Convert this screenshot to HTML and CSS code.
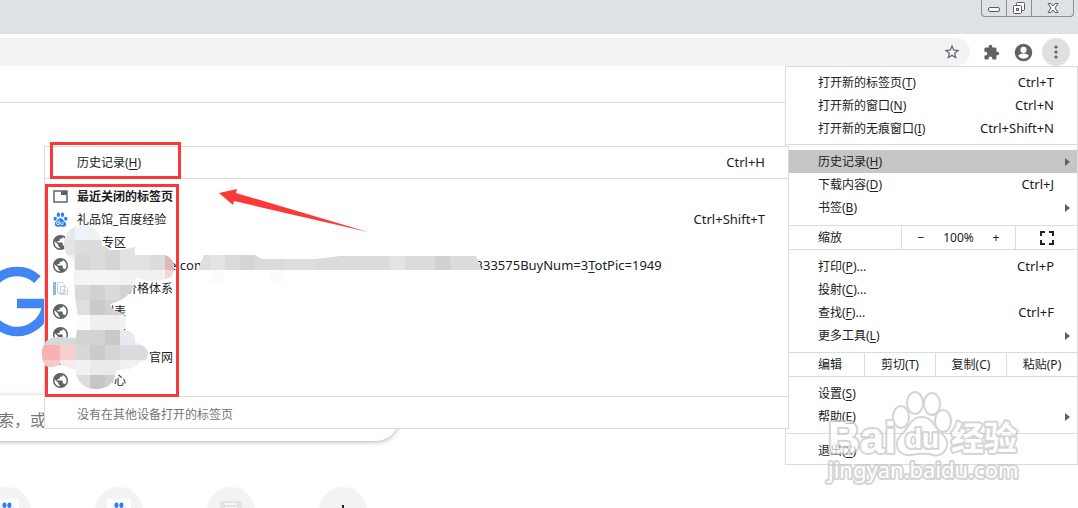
FILE: index.html
```html
<!DOCTYPE html>
<html lang="zh-CN">
<head>
  <meta charset="UTF-8">
  <meta name="viewport" content="width=device-width, initial-scale=1.0">
  <title>新标签页</title>
  <link rel="stylesheet" href="styles.css">
</head>
<body>
  <svg class="defs" aria-hidden="true">
    <symbol id="globe" viewBox="2 2 20 20">
      <path d="M12 2C6.480 2 2 6.480 2 12s4.480 10 10 10 10-4.480 10-10S17.520 2 12 2zm-1 17.930c-3.950-.49-7-3.850-7-7.930 0-.62.08-1.210.21-1.790L9 15v1c0 1.100.9 2 2 2v1.930zm6.900-2.540c-.26-.81-1-1.390-1.900-1.390h-1v-3c0-.55-.45-1-1-1H8v-2h2c.55 0 1-.45 1-1V7h2c1.100 0 2-.9 2-2v-.41c2.930 1.190 5 4.060 5 7.410 0 2.080-.8 3.970-2.100 5.390z" fill="#5f6368"/>
    </symbol>
    <symbol id="paw" viewBox="0 0 24 24">
      <g fill="#2d7dfa">
        <ellipse cx="3.600" cy="10.800" rx="2.700" ry="3.300"/>
        <ellipse cx="8.600" cy="4.300" rx="2.700" ry="3.700"/>
        <ellipse cx="15.200" cy="4.300" rx="2.700" ry="3.700"/>
        <ellipse cx="20.400" cy="10.800" rx="2.700" ry="3.300"/>
        <path d="M12 9.500c-3 0-4 3-6 5s-3.500 3-3 5.500 2.500 3.700 5 3.500 5-.4 8 0 5-1 5-3.500-1.500-3.500-3-5-3-5.500-6-5.500z"/>
      </g>
      <path d="M10 13.500v6.500H7.500a1.700 1.700 0 0 1 0-4H10M12.500 16v3q0 1 1 1h2.500V16" fill="none" stroke="#fff" stroke-width="1.300"/>
    </symbol>
    <symbol id="tab" viewBox="0 0 15 15">
      <path d="M1 2h13v11H1z" fill="#fff" stroke="#5f6368" stroke-width="1.500"/>
      <path d="M8 2h6v4H8z" fill="#5f6368"/>
    </symbol>
    <symbol id="doc" viewBox="0 0 15 15">
      <path d="M0 1h3v13H0z" fill="#8cb9dc"/>
      <path d="M4.500 1.500h5l2 2v9h-7zM7.500 5.500h5l2 2v6h-7z" fill="#f8f9fb" stroke="#cdd2da"/>
      <path d="M9 9.500h4M9 11.500h4" stroke="#cdd2da"/>
    </symbol>
  </svg>

  <header class="titlebar">
    <div class="window-controls">
      <button aria-label="最小化">
        <svg width="14" height="8" viewBox="0 0 14 8"><rect x="1.500" y="3.500" width="11" height="4" rx="1.500" fill="#fff" stroke="#555b66"/></svg>
      </button>
      <button aria-label="还原">
        <svg width="14" height="14" viewBox="0 0 14 14" fill="#fff" stroke="#555b66"><rect x="4.500" y="1.500" width="8" height="8" rx="1"/><rect x="1.500" y="4.500" width="8" height="8" rx="1"/><rect x="4.500" y="7.500" width="2" height="2"/></svg>
      </button>
      <button class="close" aria-label="关闭">
        <svg width="12" height="12" viewBox="0 0 12 12"><path d="M1 1.500h3l2 2.500 2-2.500h3L8 6l3 4.500H8L6 8l-2 2.500H1L4 6z" fill="#fff" stroke="#555b66"/></svg>
      </button>
    </div>
  </header>

  <div class="toolbar">
    <div class="omnibox">
      <button aria-label="收藏">
        <svg width="18" height="18" viewBox="0 0 24 24"><path d="M22 9.240l-7.190-.62L12 2 9.190 8.630 2 9.240l5.460 4.730L5.820 21 12 17.270 18.180 21l-1.630-7.030L22 9.240zM12 15.400l-3.760 2.270 1-4.280-3.320-2.880 4.380-.38L12 6.100l1.710 4.040 4.380.38-3.320 2.880 1 4.280L12 15.400z" fill="#5f6368"/></svg>
      </button>
    </div>
    <button aria-label="扩展程序">
      <svg width="17" height="17" viewBox="0 0 24 24"><path d="M20.500 11H19V7c0-1.100-.9-2-2-2h-4V3.500a2.500 2.500 0 0 0-5 0V5H4c-1.100 0-2 .9-2 2v3.800h1.500a2.700 2.700 0 0 1 0 5.400H2V20c0 1.100.9 2 2 2h3.800v-1.500a2.700 2.700 0 0 1 5.400 0V22H17c1.100 0 2-.9 2-2v-4h1.500a2.500 2.500 0 0 0 0-5z" fill="#5f6368"/></svg>
    </button>
    <button aria-label="个人资料">
      <svg width="23" height="23" viewBox="0 0 24 24"><path d="M12 2a10 10 0 1 0 0 20 10 10 0 0 0 0-20zm0 3.500a3.500 3.500 0 1 1 0 7 3.500 3.500 0 0 1 0-7zm0 13.700a7.200 7.200 0 0 1-6-3.200c0-2 4-3 6-3s6 1 6 3a7.200 7.200 0 0 1-6 3.200z" fill="#5f6368"/></svg>
    </button>
    <button class="more" aria-label="更多">
      <svg width="4" height="14" viewBox="0 0 4 14" fill="#5f6368"><circle cx="2" cy="2" r="1.600"/><circle cx="2" cy="7" r="1.600"/><circle cx="2" cy="12" r="1.600"/></svg>
    </button>
  </div>
  <div class="bookmarks"></div>

  <main class="newtab">
    <svg class="logo" width="80" height="80" viewBox="-23 262 80 80" role="img" aria-label="G">
      <path d="M37.500 279.500A30 30 0 1 0 47 303.500H17" fill="none" stroke="#4285f4" stroke-width="9.500"/>
    </svg>
    <div class="search">索，或</div>
    <nav class="shortcuts">
      <a href="#" aria-label="百度"><span><svg width="18" height="18"><use href="#paw"/></svg></span></a>
      <a href="#" aria-label="百度经验"><span><svg width="18" height="18"><use href="#paw"/></svg></span></a>
      <a href="#" aria-label="网站"><svg width="22" height="20" viewBox="0 0 22 20"><path d="M0 0h22v20H0z" fill="#e4e4e4"/><path d="M5 3h12M5 7h12" stroke="#f6f6f6" stroke-width="2"/></svg></a>
      <a href="#" aria-label="添加快捷方式"><svg width="16" height="16" viewBox="0 0 16 16"><path d="M8 2v12M2 8h12" stroke="#202124" stroke-width="2"/></svg></a>
    </nav>
  </main>

  <div class="menu main-menu">
    <div class="group first">
      <button class="item"><span class="label">打开新的标签页(<u>T</u>)</span><kbd>Ctrl+T</kbd></button>
      <button class="item"><span class="label">打开新的窗口(<u>N</u>)</span><kbd>Ctrl+N</kbd></button>
      <button class="item"><span class="label">打开新的无痕窗口(<u>I</u>)</span><kbd>Ctrl+Shift+N</kbd></button>
    </div>
    <div class="group library">
      <button class="item more-items active"><span class="label">历史记录(<u>H</u>)</span></button>
      <button class="item"><span class="label">下载内容(<u>D</u>)</span><kbd>Ctrl+J</kbd></button>
      <button class="item more-items"><span class="label">书签(<u>B</u>)</span></button>
    </div>
    <div class="bar">
      <span class="bar-label">缩放</span>
      <div class="zoom">
        <button aria-label="缩小">−</button>
        <span>100%</span>
        <button aria-label="放大">+</button>
      </div>
      <button class="fullscreen" aria-label="全屏">
        <svg width="14" height="14" viewBox="0 0 14 14"><path d="M1 5V1h4M9 1h4v4M13 9v4H9M5 13H1V9" fill="none" stroke="#202124" stroke-width="2"/></svg>
      </button>
    </div>
    <div class="group">
      <button class="item"><span class="label">打印(<u>P</u>)...</span><kbd>Ctrl+P</kbd></button>
      <button class="item"><span class="label">投射(<u>C</u>)...</span></button>
      <button class="item"><span class="label">查找(<u>F</u>)...</span><kbd>Ctrl+F</kbd></button>
      <button class="item more-items"><span class="label">更多工具(<u>L</u>)</span></button>
    </div>
    <div class="bar edit">
      <span class="bar-label">编辑</span>
      <button>剪切(T)</button>
      <button>复制(C)</button>
      <button>粘贴(P)</button>
    </div>
    <div class="group">
      <button class="item"><span class="label">设置(<u>S</u>)</span></button>
      <button class="item more-items"><span class="label">帮助(<u>E</u>)</span></button>
    </div>
    <div class="group last">
      <button class="item"><span class="label">退出(<u>X</u>)</span></button>
    </div>
  </div>

  <div class="menu sub-menu">
    <div class="group first">
      <button class="item"><span class="label">历史记录(<u>H</u>)</span><kbd>Ctrl+H</kbd></button>
    </div>
    <div class="group recent">
      <button class="item heading"><svg class="icon"><use href="#tab"/></svg><span class="label">最近关闭的标签页</span></button>
      <button class="item"><svg class="icon"><use href="#paw"/></svg><span class="label">礼品馆_百度经验</span><kbd>Ctrl+Shift+T</kbd></button>
      <button class="item"><svg class="icon"><use href="#globe"/></svg><span class="label cut-s">专区</span></button>
      <button class="item"><svg class="icon"><use href="#globe"/></svg><span class="label url"><span>e.com</span><span>2333575BuyNum=3<u>T</u>otPic=1949</span></span></button>
      <button class="item"><svg class="icon"><use href="#doc"/></svg><span class="label cut-m">价格体系</span></button>
      <button class="item"><svg class="icon"><use href="#globe"/></svg><span class="label cut-s">列表</span></button>
      <button class="item"><svg class="icon"><use href="#globe"/></svg><span class="label cut-s">专区</span></button>
      <button class="item"><svg class="icon"><use href="#globe"/></svg><span class="label cut-l">官网</span></button>
      <button class="item"><svg class="icon"><use href="#globe"/></svg><span class="label cut-s">中心</span></button>
    </div>
    <div class="group last">
      <button class="item" disabled><span class="label">没有在其他设备打开的标签页</span></button>
    </div>
  </div>

  <!-- red marks and mosaic -->
  <svg class="marks" width="500" height="420" viewBox="0 0 500 420" aria-hidden="true">
    <defs>
      <clipPath id="blob">
        <circle cx="83" cy="244" r="19"/>
        <path d="M73 250 104 246 110 250H120L135 247V255H165Q174 258 174 268T165 279Q155 285 136 277Q134 298 110 304Q112 312 124 314Q128 324 124 330 136 332 135 342Q149 347 148 354 147 362 140 362 134 371 116 370 115 389 95 389 78 388 75 370L60 364Q53 369 46 366 41 361 42 350 45 338 56 337L76 338 78 316 76 304 74 285z"/>
      </clipPath>
      <clipPath id="strip">
        <path d="M198 270 204 255H255L262 259H315L340 256H476L482 270V290H198z"/>
      </clipPath>
    </defs>
    <g fill="none" stroke="#fc3939" stroke-width="3">
      <path d="M51.500 143.500h128v34h-128zM46.500 185.500h131v210h-131z"/>
    </g>
    <path d="M219 193 237 189 236 193 368 232 234 201 233 205z" fill="#fc3939"/>
    <g clip-path="url(#blob)" shape-rendering="crispEdges">
      <path d="M40 225h140v165H40z" fill="#f1f1f1"/>
      <path d="M60 225h15v15H60z" fill="#e4e8ec"/>
      <path d="M75 225h15v15H75z" fill="#eff2f6"/>
      <path d="M60 240h15v15H60z" fill="#e4e4e4"/>
      <path d="M75 240h30v15H75z" fill="#dcdcde"/>
      <path d="M105 240h15v30h-15z" fill="#d6d5d5"/>
      <path d="M120 240h15v15h-15z" fill="#e3e3e3"/>
      <path d="M75 255h15v15H75z" fill="#d9d6da"/>
      <path d="M90 255h15v15H90z" fill="#dddadb"/>
      <path d="M120 255h30v15h-30z" fill="#e1e1e2"/>
      <path d="M150 255h15v15h-15z" fill="#dbdcde"/>
      <path d="M165 255h15v15h-15z" fill="#e0b6b6"/>
      <path d="M165 270h15v15h-15z" fill="#f5d6d6"/>
      <path d="M75 270h45v15H75z" fill="#f4f4f5"/>
      <path d="M75 285h15v15H75z" fill="#d9d9da"/>
      <path d="M90 285h15v15H90z" fill="#d1d0d2"/>
      <path d="M105 285h15v15h-15z" fill="#d9d9da"/>
      <path d="M120 285h15v15h-15z" fill="#cfd4d9"/>
      <path d="M75 300h15v15H75z" fill="#dfdfdf"/>
      <path d="M90 300h15v15H90z" fill="#cacaca"/>
      <path d="M105 300h30v15h-30z" fill="#d2d2d2"/>
      <path d="M75 315h15v15H75z" fill="#fbfcfb"/>
      <path d="M90 315h30v15H90z" fill="#edf0ef"/>
      <path d="M40 330h35v15H40z" fill="#d6d9dc"/>
      <path d="M75 330h30v15H75z" fill="#d3d3d3"/>
      <path d="M105 330h15v15h-15z" fill="#c9c9c9"/>
      <path d="M120 330h15v15h-15z" fill="#e7e9ee"/>
      <path d="M40 345h20v15H40z" fill="#f8b2b2"/>
      <path d="M60 345h15v15H60z" fill="#f6cfcf"/>
      <path d="M75 345h15v15H75z" fill="#d8d8d8"/>
      <path d="M90 345h15v15H90z" fill="#cbcbcb"/>
      <path d="M105 345h15v15h-15z" fill="#d4d4d4"/>
      <path d="M120 345h30v15h-30z" fill="#dcdce0"/>
      <path d="M40 360h20v15H40z" fill="#f5c9c9"/>
      <path d="M60 360h15v15H60z" fill="#f6ecec"/>
      <path d="M90 360h30v15H90z" fill="#e9ebea"/>
      <path d="M75 375h15v15H75z" fill="#dcdcdc"/>
      <path d="M90 375h15v15H90z" fill="#c5c7c6"/>
      <path d="M105 375h15v15h-15z" fill="#cfcfcf"/>
    </g>
    <g clip-path="url(#strip)" shape-rendering="crispEdges">
      <path d="M195 255h290v15H195z" fill="#dbdbdc"/>
      <path d="M195 255h15v15h-15z" fill="#e1dee2"/>
      <path d="M210 255h15v15h-15z" fill="#e4e4e4"/>
      <path d="M240 255h15v15h-15z" fill="#d5d5d2"/>
      <path d="M285 255h30v15h-30z" fill="#dedede"/>
      <path d="M345 255h30v15h-30z" fill="#d8dcdc"/>
      <path d="M390 255h15v15h-15z" fill="#e1e3e5"/>
      <path d="M435 255h15v15h-15z" fill="#d1d1d1"/>
      <path d="M210 270h15v14h-15zM270 270h15v14h-15z" fill="#fbfdfc"/>
    </g>
  </svg>

  <svg class="watermark" width="200" height="100" viewBox="0 0 200 100" aria-hidden="true">
    <g fill="#fff" stroke="#c4c4c4" stroke-width="4" paint-order="stroke" stroke-linejoin="round">
      <text x="6" y="63" class="wm-latin">Bai</text>
      <ellipse cx="79" cy="27" rx="7" ry="10"/>
      <ellipse cx="93" cy="13" rx="7" ry="10"/>
      <ellipse cx="110" cy="14" rx="7" ry="10"/>
      <ellipse cx="121" cy="31" rx="7" ry="10"/>
      <path d="M100 28C91 28 88 36 83 42S75 50 76 56 83 65 89 64 105 62 111 64 123 62 124 55 119 45 115 40 108 28 100 28z"/>
      <text x="83" y="58" class="wm-du">du</text>
      <text x="129" y="60" class="wm-cjk">经验</text>
      <text x="6" y="88" class="wm-url">jingyan.baidu.com</text>
    </g>
  </svg>
</body>
</html>
```
FILE: styles.css
```css
* {
  box-sizing: border-box;
}
body {
  margin: 0;
  height: 100vh;
  overflow: hidden;
  position: relative;
  display: flex;
  flex-direction: column;
  background: #fff;
  color: #202124;
  font-family: "Noto Sans", "Noto Sans CJK SC", sans-serif;
  font-size: 12px;
}
button {
  padding: 0;
  border: none;
  background: none;
  color: inherit;
  font: inherit;
  display: flex;
  align-items: center;
  justify-content: center;
}
.defs {
  display: none;
}

/* browser frame */
.titlebar {
  height: 34px;
  flex-shrink: 0;
  padding-right: 4px;
  display: flex;
  justify-content: flex-end;
  background: #dee1e6;
}
.window-controls {
  height: 17px;
  display: flex;
  border: 1px solid #8a8e96;
  border-top: none;
  border-radius: 0 0 4px 4px;
}
.window-controls button {
  width: 25px;
  border-right: 1px solid #8a8e96;
}
.window-controls .close {
  width: 41px;
  border-right: none;
}
.toolbar {
  height: 36px;
  flex-shrink: 0;
  padding-right: 8px;
  display: flex;
  align-items: center;
  gap: 11px;
}
.toolbar button {
  width: 21px;
  height: 28px;
}
.omnibox {
  flex: 1;
  height: 28px;
  padding-right: 8px;
  display: flex;
  justify-content: flex-end;
  background: #f1f3f4;
  border-radius: 0 14px 14px 0;
}
.toolbar .more {
  width: 28px;
  margin-left: -3px;
  background: #e0e0e0;
  border-radius: 50%;
}
.bookmarks {
  height: 33px;
  flex-shrink: 0;
  border-bottom: 1px solid #dadce0;
}

/* new tab page */
.newtab {
  flex: 1;
  min-height: 0;
  overflow: hidden;
  padding-top: 159px;
}
.logo {
  display: block;
  margin-left: -23px;
}
.search {
  width: 419px;
  height: 46px;
  margin: 53px 0 46px -20px;
  padding-left: 18px;
  line-height: 50px;
  font-size: 16px;
  color: #757575;
  border-radius: 0 23px 23px 0;
  box-shadow: 0 1px 5px rgba(32, 33, 36, 0.35);
}
.shortcuts {
  display: flex;
  gap: 64px;
  margin-left: -17px;
}
.shortcuts a {
  width: 48px;
  height: 48px;
  display: flex;
  align-items: center;
  justify-content: center;
  background: #f1f3f4;
  border-radius: 50%;
}
.shortcuts span {
  width: 24px;
  height: 24px;
  display: flex;
  align-items: center;
  justify-content: center;
  background: #fff;
}

/* menus */
.menu {
  position: absolute;
  background: #fff;
  border: 1px solid #dadce0;
}
.main-menu {
  top: 66px;
  right: 0;
  width: 293px;
}
.sub-menu {
  top: 146px;
  left: 44px;
  right: 289px;
}
.group {
  padding: 5px 0;
  border-bottom: 1px solid #dadce0;
}
.group.first {
  padding: 4px 0;
}
.group.library {
  padding-bottom: 6px;
}
.group.recent {
  padding: 6px 0 4px;
}
.group.last {
  padding-bottom: 2px;
  border-bottom: none;
}
.sub-menu .last {
  padding-top: 6px;
}
.item {
  width: 100%;
  height: 23px;
  display: grid;
  grid-template-columns: 32px 1fr auto 23px;
  justify-content: stretch;
  text-align: left;
  line-height: 23px;
}
.item.active {
  background: #c6c6c6;
}
.item:disabled {
  color: #757575;
}
.item.heading {
  font-weight: bold;
}
.item .icon {
  grid-column: 1;
  width: 15px;
  height: 15px;
  margin-left: 8px;
}
.item .label {
  grid-column: 2;
  white-space: nowrap;
}
.item kbd {
  grid-column: 3;
  font-family: inherit;
  font-size: 13px;
}
.more-items::after {
  content: "";
  grid-column: 4;
  margin-left: 11px;
  width: 0;
  border: 4px solid transparent;
  border-left: 5px solid #5f6368;
  border-right: none;
}
u {
  text-underline-offset: 2px;
}
.label.cut-s {
  padding-left: 25px;
}
.label.cut-m {
  padding-left: 48px;
}
.label.cut-l {
  padding-left: 72px;
}
.label.url {
  display: flex;
  gap: 262px;
  padding-left: 92px;
  font-size: 13px;
}

.bar {
  height: 24px;
  display: flex;
  border-bottom: 1px solid #dadce0;
  line-height: 23px;
}
.bar-label {
  width: 115px;
  padding-left: 32px;
}
.zoom {
  flex: 1;
  display: flex;
  justify-content: space-between;
  padding: 0 14px;
  border: solid #dadce0;
  border-width: 0 1px;
}
.zoom button {
  width: 10px;
}
.fullscreen {
  width: 61px;
}
.edit .bar-label {
  width: 78px;
}
.edit button {
  flex: 1;
  border-left: 1px solid #dadce0;
}

/* drawn over the page */
.marks {
  position: absolute;
  top: 0;
  left: 0;
}
.watermark {
  position: absolute;
  top: 390px;
  right: 56px;
  opacity: 0.7;
}
.wm-latin {
  font: bold 44px "Liberation Sans", sans-serif;
}
.wm-du {
  font: bold 28px "Liberation Sans", sans-serif;
}
.wm-cjk {
  font: bold 33px "Noto Sans CJK SC", sans-serif;
}
.wm-url {
  font: 22px "Noto Sans", sans-serif;
}
```
